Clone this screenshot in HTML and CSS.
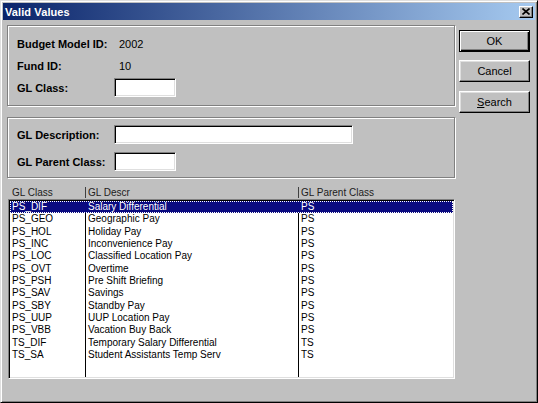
FILE: index.html
```html
<!DOCTYPE html>
<html>
<head>
<meta charset="utf-8">
<link rel="stylesheet" href="styles.css">
</head>
<body>
<div class="window">
  <div class="titlebar">
    <span class="title">Valid Values</span>
    <span class="close"><svg width="8" height="7" viewBox="0 0 8 7"><path d="M0.5 0.5 L7.5 6.5 M7.5 0.5 L0.5 6.5" stroke="#000" stroke-width="1.6" fill="none"/></svg></span>
  </div>
  <div class="client">
    <div class="main">
      <div class="group g1">
        <div class="form f1">
          <span class="lbl">Budget Model ID:</span><span class="val">2002</span>
          <span class="lbl">Fund ID:</span><span class="val">10</span>
          <span class="lbl">GL Class:</span><span class="input short"></span>
        </div>
      </div>
      <div class="group g2">
        <div class="form f2">
          <span class="lbl">GL Description:</span><span class="input long"></span>
          <span class="lbl">GL Parent Class:</span><span class="input short"></span>
        </div>
      </div>
      <div class="header">
        <span class="hcell">GL Class</span>
        <span class="hcell sep">GL Descr</span>
        <span class="hcell sep">GL Parent Class</span>
      </div>
      <div class="list">
        <div class="row selected"><span>PS_DIF</span><span>Salary Differential</span><span>PS</span></div>
        <div class="row"><span>PS_GEO</span><span>Geographic Pay</span><span>PS</span></div>
        <div class="row"><span>PS_HOL</span><span>Holiday Pay</span><span>PS</span></div>
        <div class="row"><span>PS_INC</span><span>Inconvenience Pay</span><span>PS</span></div>
        <div class="row"><span>PS_LOC</span><span>Classified Location Pay</span><span>PS</span></div>
        <div class="row"><span>PS_OVT</span><span>Overtime</span><span>PS</span></div>
        <div class="row"><span>PS_PSH</span><span>Pre Shift Briefing</span><span>PS</span></div>
        <div class="row"><span>PS_SAV</span><span>Savings</span><span>PS</span></div>
        <div class="row"><span>PS_SBY</span><span>Standby Pay</span><span>PS</span></div>
        <div class="row"><span>PS_UUP</span><span>UUP Location Pay</span><span>PS</span></div>
        <div class="row"><span>PS_VBB</span><span>Vacation Buy Back</span><span>PS</span></div>
        <div class="row"><span>TS_DIF</span><span>Temporary Salary Differential</span><span>TS</span></div>
        <div class="row"><span>TS_SA</span><span>Student Assistants Temp Serv</span><span>TS</span></div>
      </div>
    </div>
    <div class="buttons">
      <div class="btn default">OK</div>
      <div class="btn b2">Cancel</div>
      <div class="btn b3"><u>S</u>earch</div>
    </div>
  </div>
</div>
</body>
</html>
```

FILE: styles.css
```css
html, body {
  margin: 0;
  padding: 0;
  background: #c0c0c0;
}
body {
  font-family: "Liberation Sans", Arial, sans-serif;
  font-size: 11px;
  color: #000;
}
.window {
  box-sizing: border-box;
  width: 538px;
  height: 403px;
  background: #c0c0c0;
  border: 1px solid;
  border-color: #dfdfdf #000 #000 #dfdfdf;
  box-shadow: inset 1px 1px 0 #fff, inset -1px -1px 0 #808080;
  padding: 2px;
}
.titlebar {
  height: 17px;
  background: linear-gradient(to right, #0a246a, #a6caf0);
  display: flex;
  align-items: center;
  justify-content: space-between;
  padding-left: 2px;
  padding-right: 2px;
}
.title {
  color: #fff;
  font-weight: bold;
  font-size: 11px;
  letter-spacing: 0.1px;
}
.close {
  box-sizing: border-box;
  width: 14px;
  height: 12px;
  background: #c0c0c0;
  border: 1px solid;
  border-color: #fff #000 #000 #fff;
  box-shadow: inset -1px -1px 0 #808080;
  display: flex;
  align-items: center;
  justify-content: center;
  padding-right: 1px;
}
.close svg { display: block; }
.client {
  display: flex;
  align-items: flex-start;
}
.main {
  width: 448px;
  margin-left: 4px;
  display: flex;
  flex-direction: column;
}
.group {
  box-sizing: border-box;
  border: 1px solid #808080;
  box-shadow: 1px 1px 0 #fff, inset 1px 1px 0 #fff;
  padding-left: 9px;
}
.g1 {
  margin-top: 5px;
  height: 81px;
  padding-top: 8px;
}
.g2 {
  margin-top: 11px;
  height: 61px;
  padding-top: 7px;
}
.form {
  display: grid;
  grid-template-columns: 97px auto;
  grid-auto-rows: 19px;
  align-items: center;
  justify-items: start;
}
.f1 { row-gap: 3px; }
.f2 { row-gap: 8px; }
.lbl {
  font-weight: bold;
  font-size: 11px;
}
.val {
  padding-left: 5px;
}
.input {
  box-sizing: border-box;
  height: 19px;
  background: #fff;
  border: 1px solid;
  border-color: #808080 #fff #fff #808080;
  box-shadow: inset 1px 1px 0 #000, inset -1px -1px 0 #dfdfdf;
}
.input.short { width: 62px; }
.input.long { width: 239px; }
.header {
  margin-top: 8px;
  margin-left: 3px;
  height: 13px;
  display: grid;
  grid-template-columns: 75px 213px 1fr;
  align-items: center;
  font-size: 10px;
  color: #202020;
}
.hcell {
  padding-left: 2px;
  line-height: 11px;
}
.hcell.sep {
  border-left: 1px solid #404040;
  padding-left: 2px;
}
.list {
  box-sizing: border-box;
  margin-left: 1px;
  width: 447px;
  height: 180px;
  border: 1px solid;
  border-color: #808080 #fff #fff #808080;
  box-shadow: inset 1px 1px 0 #000, inset -1px -1px 0 #dfdfdf;
  padding: 1px;
  background:
    linear-gradient(to right,
      transparent 76px, #000 76px, #000 77px, transparent 77px,
      transparent 289px, #000 289px, #000 290px, transparent 290px),
    #fff;
  background-size: 100% calc(100% - 2px);
  background-position: 0 1px;
  background-repeat: no-repeat;
}
.row {
  display: grid;
  grid-template-columns: 75px 213px 1fr;
  height: 12.35px;
  line-height: 12.35px;
  font-size: 10px;
  white-space: nowrap;
}
.row span { padding-left: 3px; }
.row span:first-child { padding-left: 2px; }
.row.selected {
  background: #0a0a80;
  color: #fff;
  outline: 1px dotted #fff;
  outline-offset: -1px;
}
.buttons {
  margin-left: 4px;
  margin-top: 10px;
  display: flex;
  flex-direction: column;
}
.btn {
  box-sizing: border-box;
  width: 71px;
  height: 22px;
  background: #c0c0c0;
  border: 1px solid;
  border-color: #fff #000 #000 #fff;
  box-shadow: inset -1px -1px 0 #808080, inset 1px 1px 0 #dfdfdf;
  display: flex;
  align-items: center;
  justify-content: center;
  font-size: 11px;
}
.btn.default {
  border-color: #000;
  box-shadow: inset 1px 1px 0 #fff, inset -1px -1px 0 #000, inset -2px -2px 0 #808080;
}
.b2 { margin-top: 8px; }
.b3 { margin-top: 9px; }
.btn u { text-decoration: underline; }
```
